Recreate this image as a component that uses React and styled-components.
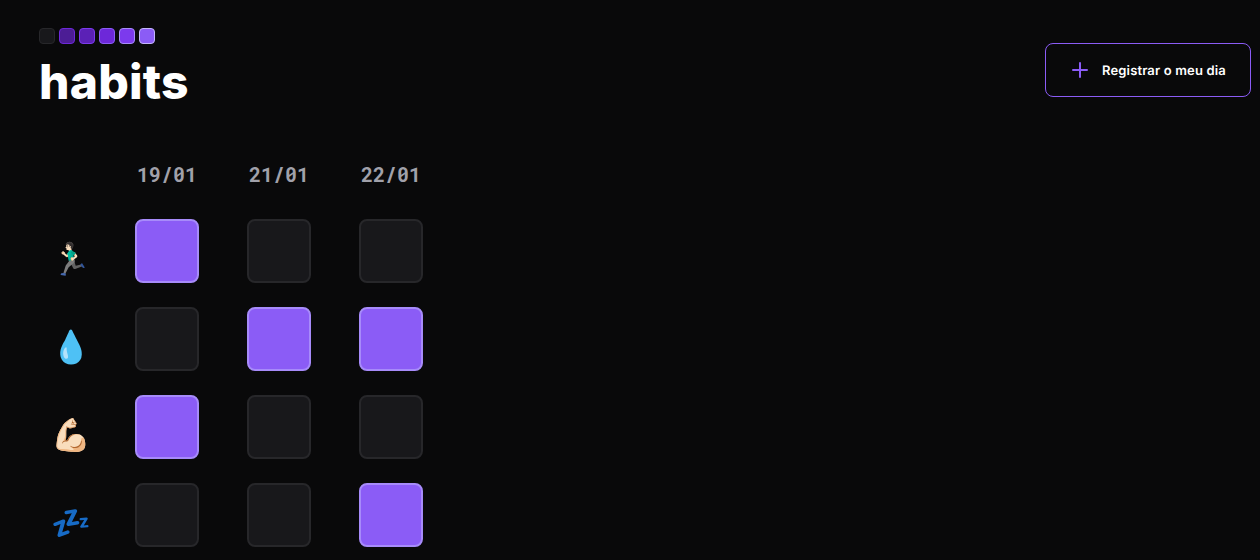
import React from "react";
import styled, { createGlobalStyle } from "styled-components";

const GlobalStyle = createGlobalStyle`
  * { box-sizing: border-box; }
  body {
    margin: 0;
    background: #09090a;
    color: #fff;
    font-family: Inter, "Liberation Sans", sans-serif;
    overflow: hidden;
  }
`;

const Page = styled.main`
  height: 560px;
  overflow: hidden;
  padding: 28px 9px 0 39px;
`;

const Header = styled.header`
  display: flex;
  justify-content: space-between;
  align-items: flex-start;
  height: 107px;
`;

const Legend = styled.div`
  display: flex;
  gap: 4px;
`;

const Swatch = styled.span`
  width: 16px;
  height: 16px;
  border-radius: 4px;
  border: 1px solid ${(p) => p.$edge};
  background: ${(p) => p.$fill};
`;

const Title = styled.h1`
  margin: 9px 0 0;
  font-size: 48px;
  line-height: 58px;
  font-weight: 800;
  letter-spacing: 0.2px;
`;

const RegisterButton = styled.button`
  display: flex;
  align-items: center;
  gap: 12px;
  width: 206px;
  height: 54px;
  margin-top: 15px;
  padding: 0 24px;
  border: 1px solid #8b5cf6;
  border-radius: 8px;
  background: transparent;
  color: #fff;
  font: 600 13px Inter, "Liberation Sans", sans-serif;
  letter-spacing: 0.15px;
  text-rendering: geometricPrecision;
  white-space: nowrap;
`;

const ButtonLabel = styled.span`
  padding-top: 1px;
`;

const Table = styled.section`
  display: grid;
  grid-template-columns: 64px repeat(3, 64px);
  column-gap: 48px;
  row-gap: 24px;
  margin-left: -16px;
`;

const DateLabel = styled.div`
  height: 60px;
  padding-top: 25px;
  text-align: center;
  font: 700 20px/28px "Roboto Mono", "DejaVu Sans Mono", monospace;
  color: #a1a1aa;
`;

const Emoji = styled.div`
  display: flex;
  justify-content: center;
  height: 64px;
  padding-top: 18px;
  padding-left: 32px;
  font-size: 32px;
  line-height: 44px;
  white-space: nowrap;
`;

const Day = styled.div`
  width: 64px;
  height: 64px;
  border-radius: 8px;
  border: 2px solid ${(p) => (p.$done ? "#a78bfa" : "#27272a")};
  background: ${(p) => (p.$done ? "#8b5cf6" : "#18181b")};
`;

const swatches = [
  ["#18181b", "#27272a"],
  ["#4c1d95", "#6d28d9"],
  ["#5b21b6", "#7c3aed"],
  ["#6d28d9", "#8b5cf6"],
  ["#7c3aed", "#a78bfa"],
  ["#8b5cf6", "#c4b5fd"],
];

const dates = ["19/01", "21/01", "22/01"];

const habits = [
  { name: "run", icon: "🏃🏻‍♂️", days: [1, 0, 0] },
  { name: "water", icon: "💧", days: [0, 1, 1] },
  { name: "strength", icon: "💪🏻", days: [1, 0, 0] },
  { name: "sleep", icon: "💤", days: [0, 0, 1] },
];

function PlusIcon() {
  return (
    <svg width="20" height="20" viewBox="0 0 20 20" fill="none" stroke="#8b5cf6" strokeWidth="2" strokeLinecap="round">
      <path d="M10 3v14M3 10h14" />
    </svg>
  );
}

export default function App() {
  return (
    <Page>
      <GlobalStyle />
      <Header>
        <div>
          <Legend>
            {swatches.map(([fill, edge]) => (
              <Swatch key={fill} $fill={fill} $edge={edge} />
            ))}
          </Legend>
          <Title>habits</Title>
        </div>
        <RegisterButton>
          <PlusIcon />
          <ButtonLabel>Registrar o meu dia</ButtonLabel>
        </RegisterButton>
      </Header>
      <Table>
        <span />
        {dates.map((d) => (
          <DateLabel key={d}>{d}</DateLabel>
        ))}
        {habits.map((h) => (
          <React.Fragment key={h.name}>
            <Emoji>{h.icon}</Emoji>
            {h.days.map((done, i) => (
              <Day key={i} $done={done === 1} />
            ))}
          </React.Fragment>
        ))}
      </Table>
    </Page>
  );
}
